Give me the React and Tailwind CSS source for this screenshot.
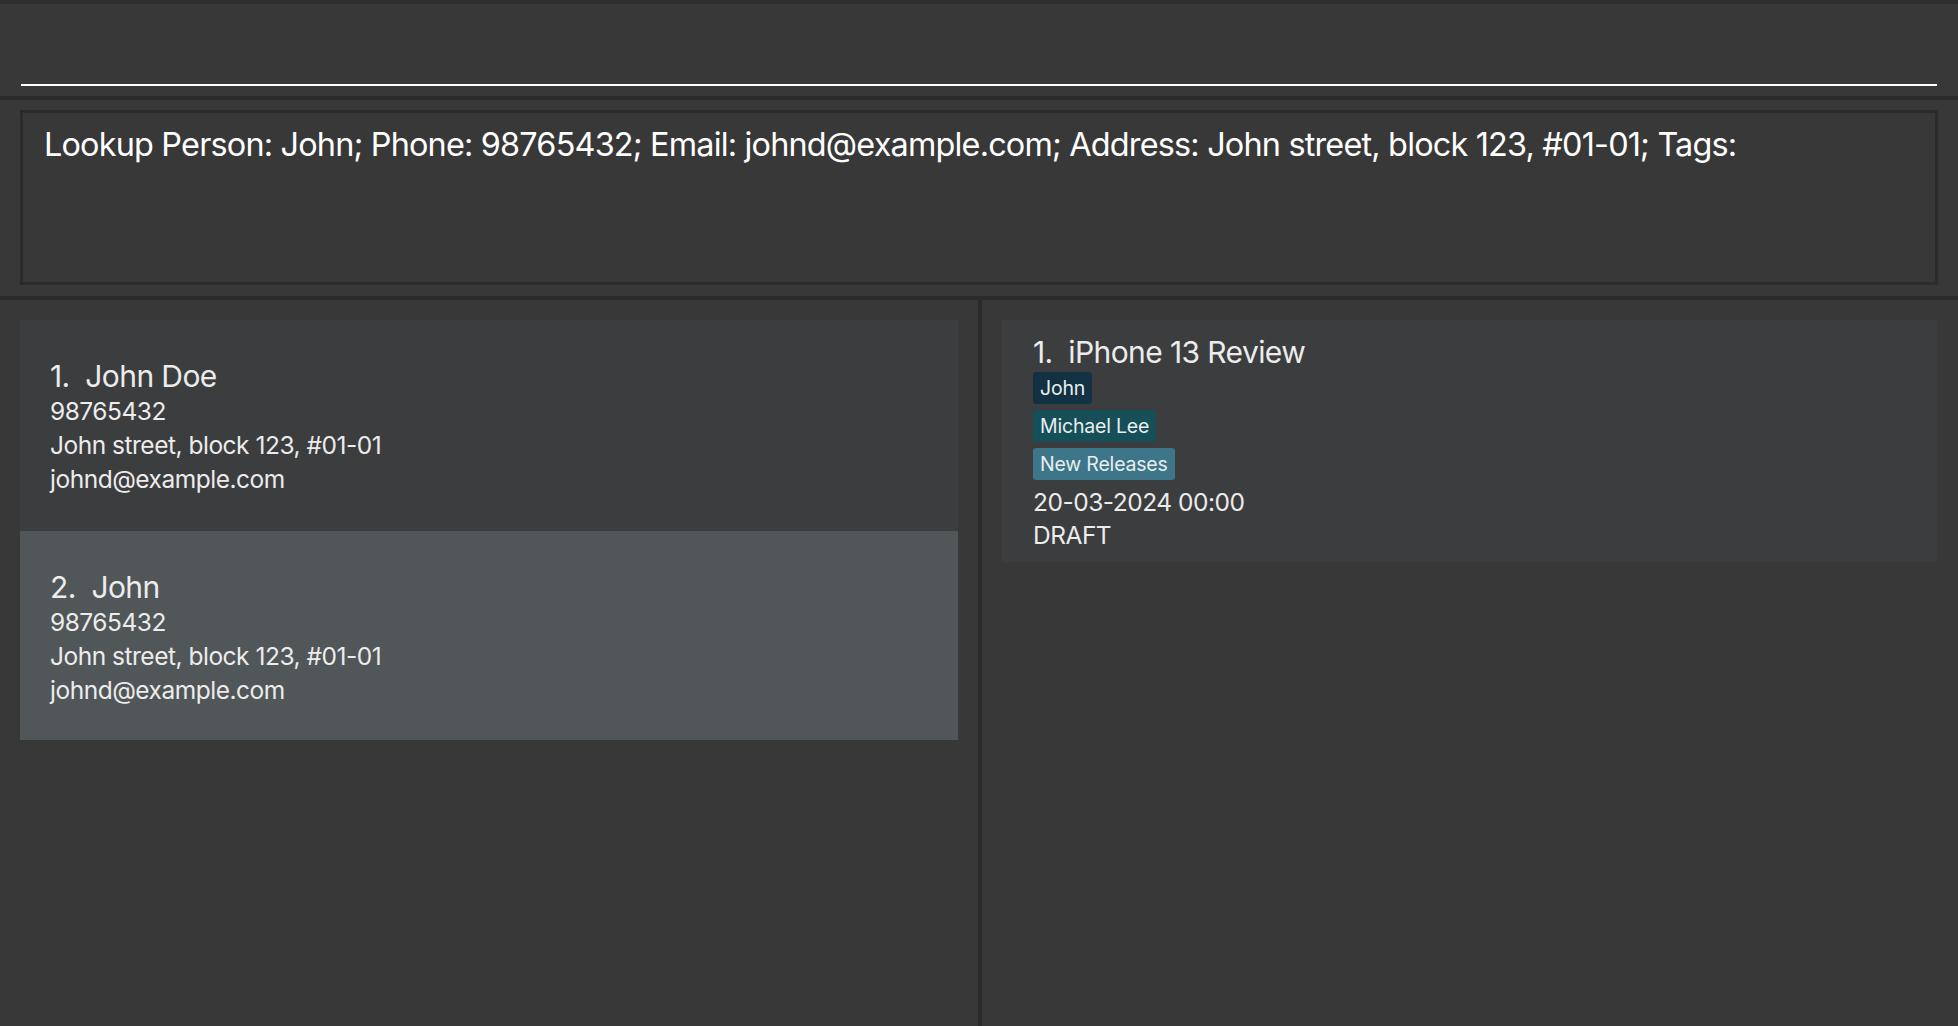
const persons = [
  {
    id: 1,
    name: "John Doe",
    phone: "98765432",
    address: "John street, block 123, #01-01",
    email: "johnd@example.com",
    selected: false,
  },
  {
    id: 2,
    name: "John",
    phone: "98765432",
    address: "John street, block 123, #01-01",
    email: "johnd@example.com",
    selected: true,
  },
];

const events = [
  {
    id: 1,
    title: "iPhone 13 Review",
    tags: [
      { label: "John", cls: "bg-[#123244]" },
      { label: "Michael Lee", cls: "bg-[#164f57]" },
      { label: "New Releases", cls: "bg-[#3d7689]" },
    ],
    date: "20-03-2024 00:00",
    status: "DRAFT",
  },
];

const PersonCard = ({ index, person }) => (
  <div
    className={`pl-[30px] pt-[38px] text-[#ececec] ${
      person.selected ? "h-[209px] bg-[#515658]" : "h-[211px] bg-[#3c3d3f]"
    }`}
  >
    <p className="text-[30px] leading-[36px] tracking-[-0.02em]">
      {index}.&nbsp;&nbsp;{person.name}
    </p>
    <p className="text-[24.5px] leading-[34px] tracking-[-0.02em]">{person.phone}</p>
    <p className="text-[24.5px] leading-[34px] tracking-[-0.02em]">{person.address}</p>
    <p className="text-[24.5px] leading-[34px] tracking-[-0.02em]">{person.email}</p>
  </div>
);

const EventCard = ({ index, event }) => (
  <div className="h-[242px] bg-[#3c3d3f] pl-[31px] pt-[14px] text-[#ececec]">
    <p className="text-[30px] leading-[36px] tracking-[-0.02em]">
      {index}.&nbsp;&nbsp;{event.title}
    </p>
    <div className="flex flex-col items-start gap-[6px] mt-[2px]">
      {event.tags.map((t) => (
        <span
          key={t.label}
          className={`${t.cls} h-[32px] px-[7px] rounded-[3px] text-[19.5px] leading-[32px] tracking-[-0.01em] text-[#e8eef0]`}
        >
          {t.label}
        </span>
      ))}
    </div>
    <p className="mt-[5px] text-[24.5px] leading-[34px] tracking-[-0.02em]">{event.date}</p>
    <p className="text-[24.5px] leading-[32px] tracking-[-0.02em]">{event.status}</p>
  </div>
);

export default function App() {
  return (
    <div
      className="w-full h-[1026px] flex flex-col bg-[#383838] overflow-hidden"
      style={{ fontFamily: "Inter, Roboto, 'Liberation Sans', sans-serif" }}
    >
      {/* command box */}
      <div className="h-[4px] bg-[#2e2e2e]" />
      <div className="h-[92px] flex flex-col justify-end px-[21px] pb-[10px]">
        <div className="h-[2px] bg-white" />
      </div>
      <div className="h-[4px] bg-[#2b2b2b]" />

      {/* result display */}
      <div className="h-[196px] px-[20px] pt-[10px] pb-[11px]">
        <div className="h-full border-[3px] border-[#2b2b2b] pl-[21px] pt-[12px]">
          <p className="text-[32.4px] leading-[40px] tracking-[-0.025em] text-white">
            Lookup Person: John; Phone: 98765432; Email: johnd@example.com; Address: John street, block 123, #01-01; Tags:
          </p>
        </div>
      </div>
      <div className="h-[4px] bg-[#2b2b2b]" />

      {/* lists */}
      <div className="flex-1 flex">
        <div className="w-[978px] px-[20px] pt-[20px] flex flex-col">
          {persons.map((p, i) => (
            <PersonCard key={p.id} index={i + 1} person={p} />
          ))}
        </div>
        <div className="w-[4px] bg-[#2b2b2b]" />
        <div className="flex-1 pl-[20px] pr-[21px] pt-[20px]">
          {events.map((e, i) => (
            <EventCard key={e.id} index={i + 1} event={e} />
          ))}
        </div>
      </div>
    </div>
  );
}
